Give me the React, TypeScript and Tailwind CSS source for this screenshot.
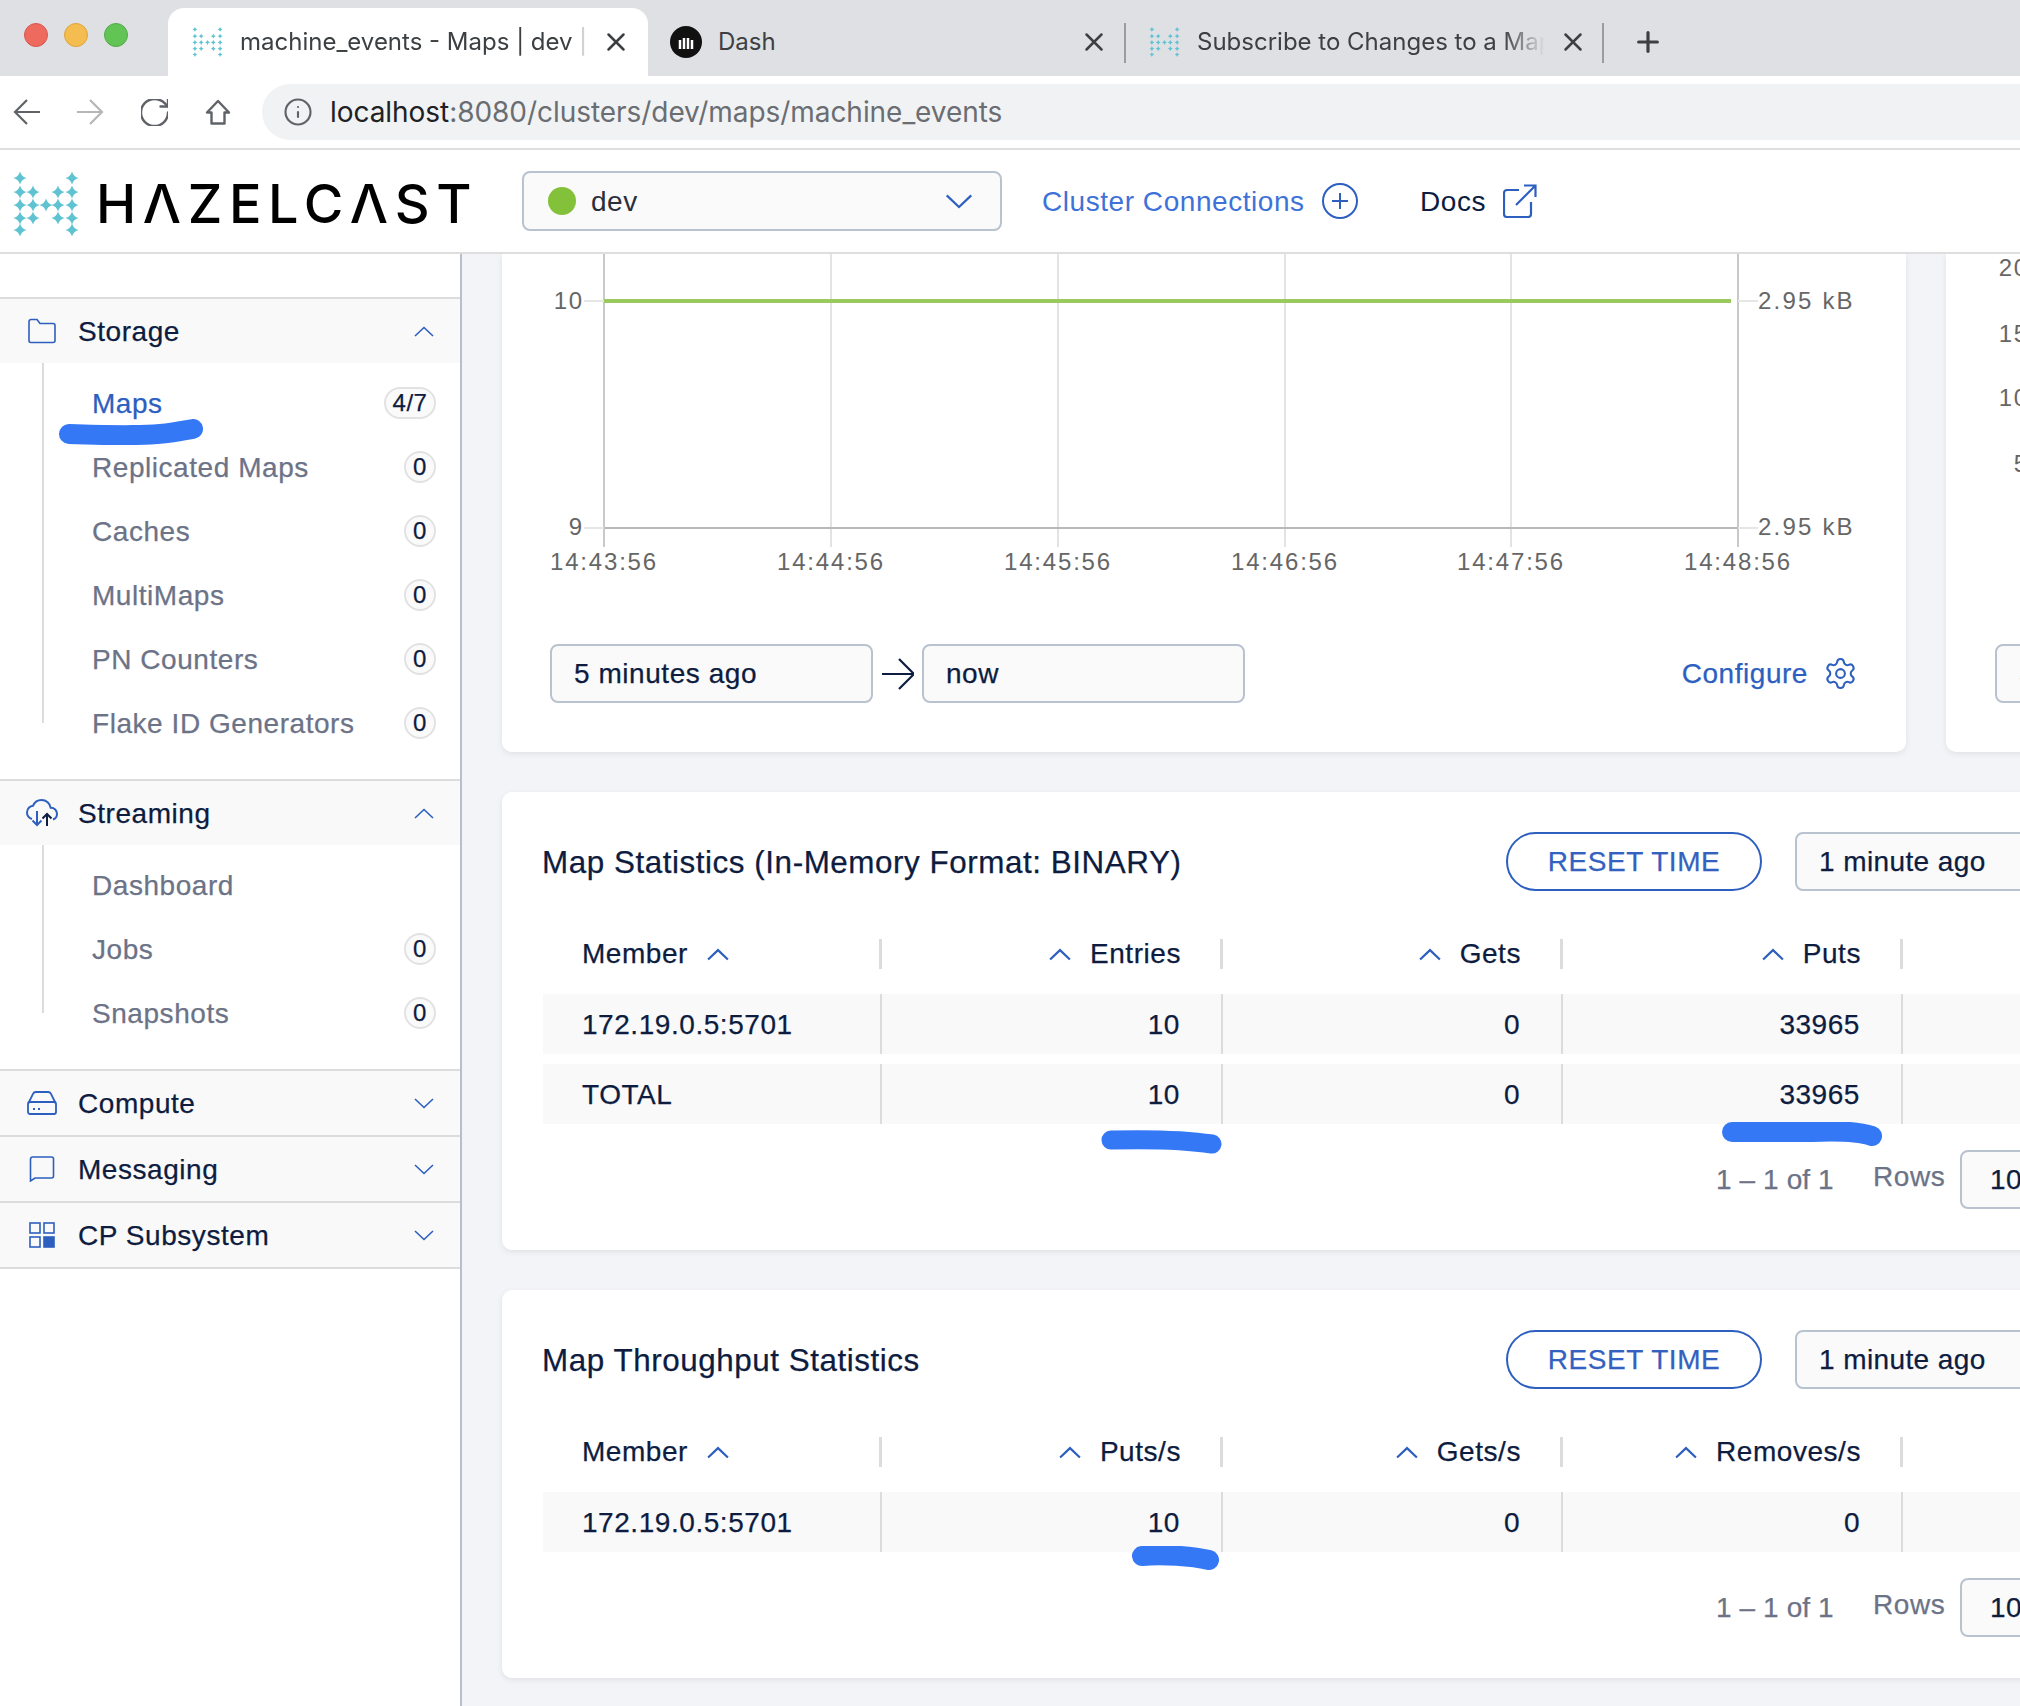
import { Info, Plus, RotateCw, Settings, X } from 'lucide-react';
import type { ReactNode } from 'react';

const STARS = [
  [5, 6], [5, 20], [5, 33], [5, 46], [5, 58],
  [18, 20], [18, 33], [18, 46],
  [31, 33],
  [43, 20], [43, 33], [43, 46],
  [57, 6], [57, 20], [57, 33], [57, 46], [57, 58],
];

function star(cx: number, cy: number, r: number) {
  const k = r * 0.22;
  return `M${cx} ${cy - r}Q${cx + k} ${cy - k} ${cx + r} ${cy}Q${cx + k} ${cy + k} ${cx} ${cy + r}Q${cx - k} ${cy + k} ${cx - r} ${cy}Q${cx - k} ${cy - k} ${cx} ${cy - r}Z`;
}

function LogoMark({ className, r = 6.6 }: { className: string; r?: number }) {
  return (
    <svg viewBox="-2 -1 66 66" className={className} fill="#5fc3d2">
      {STARS.map(([x, y]) => (
        <path key={`${x}-${y}`} d={star(x, y, r)} />
      ))}
    </svg>
  );
}

function Chevron({ up, className = 'w-[20px] h-[11px]', width = 1.6 }: { up?: boolean; className?: string; width?: number }) {
  return (
    <svg viewBox="0 0 20 11" className={className} fill="none" stroke="#2d5fbf" strokeWidth={width}>
      <path d={up ? 'M1 10L10 1.5L19 10' : 'M1 1L10 9.5L19 1'} />
    </svg>
  );
}

function FolderIcon() {
  return (
    <svg viewBox="0 0 28 26" className="ml-[28px] w-[28px] h-[26px]" fill="none" stroke="#2d5fbf" strokeWidth="1.6">
      <path d="M1 3.500a2 2 0 0 1 2-2h6l3 4h13a2 2 0 0 1 2 2v15a2 2 0 0 1-2 2H3a2 2 0 0 1-2-2z" />
    </svg>
  );
}

function CloudIcon() {
  return (
    <svg viewBox="0 0 32 28" className="ml-[26px] w-[32px] h-[28px]" fill="none" strokeWidth="2">
      <path stroke="#2d5fbf" d="M6 20C3 19 1 16.500 1 13.500 1 9.500 4 7 7 6.800 8.500 3.300 12 1 15.500 1c4.800 0 8.500 3.400 9.200 7.800C28.300 8.700 31 11.300 31 15c0 2.500-1.500 4.700-4 5.500" />
      <path stroke="#2d5fbf" d="M11 12v14M6.500 21.500L11 26l4.500-4.500" />
      <path stroke="#0d1c3f" d="M21 27V15M16.500 19.500L21 15l4.500 4.500" />
    </svg>
  );
}

function DriveIcon() {
  return (
    <svg viewBox="0 0 30 24" className="ml-[27px] w-[30px] h-[24px]" fill="none" stroke="#2d5fbf" strokeWidth="1.800">
      <path d="M1.500 12L6 3a3 3 0 0 1 2.500-2h13a3 3 0 0 1 2.500 2L28.500 12" />
      <rect x="1" y="11" width="28" height="12" rx="2" />
      <path d="M6 18h2M11 18h2" />
    </svg>
  );
}

function ChatIcon() {
  return (
    <svg viewBox="0 0 26 26" className="ml-[29px] w-[26px] h-[26px]" fill="none" stroke="#2d5fbf" strokeWidth="1.600">
      <path d="M1.500 3a2 2 0 0 1 2-2h19a2 2 0 0 1 2 2v17a2 2 0 0 1-2 2H6L1.500 25z" />
    </svg>
  );
}

function GridIcon() {
  return (
    <svg viewBox="0 0 26 26" className="ml-[29px] w-[26px] h-[26px]" fill="none" stroke="#2d5fbf" strokeWidth="1.600">
      <rect x="1" y="1" width="10" height="10" />
      <rect x="15" y="1" width="10" height="10" />
      <rect x="1" y="15" width="10" height="10" />
      <rect x="15" y="15" width="10" height="10" fill="#2d5fbf" />
    </svg>
  );
}

function TabBar() {
  return (
    <div className="relative h-[76px] shrink-0 bg-[#dfe0e4] flex items-end font-['Inter',sans-serif] tracking-normal">
      <div className="flex items-center gap-[16px] pl-[24px] w-[168px] self-start pt-[23px]">
        <span className="w-[24px] h-[24px] rounded-full bg-[#ee6a5f] border border-[#d9574d]" />
        <span className="w-[24px] h-[24px] rounded-full bg-[#f5bd4f] border border-[#dfa33c]" />
        <span className="w-[24px] h-[24px] rounded-full bg-[#61c454] border border-[#52ab46]" />
      </div>
      <div className="relative w-[480px] pl-[23px] h-[68px] bg-white rounded-t-[16px] flex items-center">
        <LogoMark className="w-[33px] h-[32px]" r={5} />
        <span className="ml-[16px] w-[346px] overflow-hidden whitespace-nowrap text-[24px] text-[#3c4043] [mask-image:linear-gradient(to_right,black_97%,transparent)]">
          machine_events - Maps | dev | Hazelcast
        </span>
        <X className="ml-[15px] text-[#3c4043]" size={30} strokeWidth={2} />
      </div>
      <div className="relative w-[478px] pl-[22px] h-[68px] flex items-center">
        <svg viewBox="0 0 32 32" className="w-[32px] h-[32px]">
          <circle cx="16" cy="16" r="16" fill="#111" />
          <path d="M10 14v9M14 12v11M18 12v11M22 14v9" stroke="#fff" strokeWidth="2.500" />
        </svg>
        <span className="ml-[16px] text-[24px] text-[#3c4043]">Dash</span>
        <X className="absolute left-[431px] text-[#3c4043]" size={30} strokeWidth={2} />
        <span className="absolute right-0 top-[15px] h-[40px] w-[2px] bg-[#9b9ca0]" />
      </div>
      <div className="relative w-[478px] pl-[22px] h-[68px] flex items-center">
        <LogoMark className="w-[33px] h-[32px]" r={5} />
        <span className="ml-[16px] w-[348px] overflow-hidden whitespace-nowrap text-[24px] text-[#3c4043] [mask-image:linear-gradient(to_right,black_88%,transparent)]">
          Subscribe to Changes to a Map
        </span>
        <X className="absolute left-[432px] text-[#3c4043]" size={30} strokeWidth={2} />
        <span className="absolute right-0 top-[15px] h-[40px] w-[2px] bg-[#9b9ca0]" />
      </div>
      <div className="h-[68px] flex items-center pl-[28px]">
        <Plus className="text-[#3c4043]" size={32} strokeWidth={2.4} />
      </div>
    </div>
  );
}

function Toolbar() {
  return (
    <div className="h-[74px] shrink-0 bg-white border-b-2 border-[#dedede] flex items-center font-['Inter',sans-serif] tracking-normal">
      <div className="flex items-center w-[262px] pl-[13px] gap-[37px]">
        <svg viewBox="0 0 27 26" className="w-[27px] h-[26px]" fill="none" stroke="#5f6368" strokeWidth="2.200">
          <path d="M27 13H2M14 1L2 13l12 12" />
        </svg>
        <svg viewBox="0 0 27 26" className="w-[27px] h-[26px]" fill="none" stroke="#b5b6b8" strokeWidth="2.200">
          <path d="M0 13h25M13 1l12 12-12 12" />
        </svg>
        <RotateCw viewBox="3 3 18 18" className="w-[27px] h-[27px] text-[#5f6368]" strokeWidth={1.6} />
        <svg viewBox="0 0 26 26" className="w-[26px] h-[26px]" fill="none" stroke="#5f6368" strokeWidth="2.400" strokeLinejoin="round">
          <path d="M13 2L2 13.500h4.500V24.500h13V13.500H24z" />
        </svg>
      </div>
      <div className="flex-1 h-[56px] rounded-l-full bg-[#f1f2f4] flex items-center pl-[21px]">
        <Info className="text-[#5f6368]" size={30} strokeWidth={1.7} />
        <span className="ml-[17px] text-[28px] tracking-[-0.05px] text-[#6a6d71] whitespace-nowrap">
          <span className="text-[#202124]">localhost</span>:8080/clusters/dev/maps/machine_events
        </span>
      </div>
    </div>
  );
}

function AppHeader() {
  return (
    <div className="h-[104px] shrink-0 bg-white border-b-2 border-[#dedede] flex items-center">
      <LogoMark className="ml-[13px] mt-[5px] w-[66px] h-[66px]" />
      <span className="ml-[17px] mt-[6px] w-[426px] font-['Inter',sans-serif] text-[54px] leading-none font-medium text-black tracking-[6.6px] whitespace-nowrap">
        HΛZELCΛST
      </span>
      <div className="w-[480px] h-[60px] rounded-[8px] border-2 border-[#b9c2cf] bg-[#fafafa] flex items-center pl-[24px] pr-[27px]">
        <span className="w-[28px] h-[28px] rounded-full bg-[#84c13a]" />
        <span className="ml-[15px] pt-[2px] text-[28px] text-[#2b2f3a]">dev</span>
        <Chevron className="ml-auto w-[28px] h-[15px]" />
      </div>
      <span className="ml-[40px] w-[262px] pt-[2px] text-[28px] text-[#3f72d8] whitespace-nowrap">Cluster Connections</span>
      <svg viewBox="0 0 36 36" className="ml-[18px] w-[36px] h-[36px]" fill="none" stroke="#2d5fbf" strokeWidth="2">
        <circle cx="18" cy="18" r="17" />
        <path d="M18 10v16M10 18h16" />
      </svg>
      <span className="ml-[62px] w-[64px] pt-[2px] text-[28px] text-[#0d1c3f]">Docs</span>
      <svg viewBox="0 0 34 34" className="ml-[19px] w-[34px] h-[34px]" fill="none" stroke="#2d5fbf" strokeWidth="2.200">
        <path d="M16 6H4a3 3 0 0 0-3 3v21a3 3 0 0 0 3 3h21a3 3 0 0 0 3-3V18" />
        <path d="M13 21L32 2M21 1.500h11.500V13" />
      </svg>
    </div>
  );
}

function SideItem({ label, count, active }: { label: string; count?: string; active?: boolean }) {
  return (
    <div className="h-[64px] flex items-center justify-between pl-[92px] pr-[24px]">
      <span className={`pt-[1px] text-[28px] whitespace-nowrap ${active ? 'text-[#2d5fbf]' : 'text-[#6c7387]'}`}>{label}</span>
      {count && (
        <span className={`h-[32px] rounded-full border-2 border-[#e2e2e2] bg-[#fafafa] flex items-center justify-center text-[24px] text-[#0d1c3f] ${count.length > 1 ? 'w-[52px]' : 'w-[32px]'}`}>
          {count}
        </span>
      )}
    </div>
  );
}

function SideSection({ icon, label, open, children, lineHeight }: { icon: ReactNode; label: string; open?: boolean; children?: ReactNode; lineHeight?: string }) {
  return (
    <div>
      <div className="h-[66px] border-t-2 border-[#dcdcdc] bg-[#f9f9f9] flex items-center pr-[26px]">
        <span className="w-[78px] flex items-center">{icon}</span>
        <span className="pt-[2px] text-[28px] text-[#0d1c3f]">{label}</span>
        <Chevron up={open} className="ml-auto w-[20px] h-[11px]" />
      </div>
      {children && (
        <div className="relative pt-[8px] pb-[24px]">
          <span className={`absolute left-[42px] top-0 w-[2px] bg-[#dcdcdc] ${lineHeight}`} />
          {children}
        </div>
      )}
    </div>
  );
}

function Sidebar() {
  return (
    <aside className="w-[462px] shrink-0 bg-white border-r-2 border-[#b8bfca] pt-[43px] [-webkit-text-stroke:0.25px]">
      <SideSection icon={<FolderIcon />} label="Storage" open lineHeight="h-[360px]">
        <SideItem label="Maps" count="4/7" active />
        <SideItem label="Replicated Maps" count="0" />
        <SideItem label="Caches" count="0" />
        <SideItem label="MultiMaps" count="0" />
        <SideItem label="PN Counters" count="0" />
        <SideItem label="Flake ID Generators" count="0" />
      </SideSection>
      <SideSection icon={<CloudIcon />} label="Streaming" open lineHeight="h-[168px]">
        <SideItem label="Dashboard" />
        <SideItem label="Jobs" count="0" />
        <SideItem label="Snapshots" count="0" />
      </SideSection>
      <SideSection icon={<DriveIcon />} label="Compute" />
      <SideSection icon={<ChatIcon />} label="Messaging" />
      <SideSection icon={<GridIcon />} label="CP Subsystem" />
      <div className="border-t-2 border-[#dcdcdc]" />
    </aside>
  );
}

const GRID_X = [102, 329, 556, 783, 1009, 1236];
const TIMES = ['14:43:56', '14:44:56', '14:45:56', '14:46:56', '14:47:56', '14:48:56'];

function Chart() {
  const labelClass = "text-[24px] tracking-[1.8px] fill-[#666] font-['Liberation_Sans',sans-serif]";
  const unitClass = "text-[24px] tracking-[2.2px] fill-[#666] font-['Liberation_Sans',sans-serif]";
  return (
    <svg viewBox="0 0 1404 340" className="w-[1404px] h-[340px] block">
      {GRID_X.map((x, i) => (
        <line key={x} x1={x} x2={x} y1="0" y2="293" stroke={i === 0 || i === 5 ? '#c9c9c9' : '#e3e3e3'} strokeWidth="2" />
      ))}
      <line x1="82" x2="102" y1="47" y2="47" stroke="#e6e6e6" strokeWidth="2" />
      <line x1="82" x2="102" y1="274" y2="274" stroke="#e6e6e6" strokeWidth="2" />
      <line x1="1236" x2="1256" y1="47" y2="47" stroke="#e6e6e6" strokeWidth="2" />
      <line x1="1236" x2="1256" y1="274" y2="274" stroke="#e6e6e6" strokeWidth="2" />
      <line x1="102" x2="1236" y1="274" y2="274" stroke="#b9b9b9" strokeWidth="2" />
      <line x1="102" x2="1229" y1="47" y2="47" stroke="#9ac95e" strokeWidth="4" />
      <text x="82" y="55" textAnchor="end" className={labelClass}>10</text>
      <text x="82" y="281" textAnchor="end" className={labelClass}>9</text>
      <text x="1256" y="55" className={unitClass}>2.95 kB</text>
      <text x="1256" y="281" className={unitClass}>2.95 kB</text>
      {GRID_X.map((x, i) => (
        <text key={x} x={x} y="316" textAnchor="middle" className={labelClass}>{TIMES[i]}</text>
      ))}
    </svg>
  );
}

function Field({ value, className }: { value: string; className: string }) {
  return (
    <div className={`h-[59px] shrink-0 rounded-[8px] border-2 border-[#b9c2cf] bg-[#fafafa] flex items-center text-[28px] text-[#0d1c3f] whitespace-nowrap ${className}`}>
      {value}
    </div>
  );
}

function ChartCards() {
  return (
    <div className="flex gap-[40px]">
      <section className="w-[1404px] shrink-0 h-[498px] bg-white rounded-b-[10px] shadow-[0_2px_6px_rgba(0,0,0,0.08)]">
        <Chart />
        <div className="mt-[50px] px-[48px] flex items-center">
          <Field value="5 minutes ago" className="w-[323px] pl-[22px]" />
          <svg viewBox="0 0 32 32" className="ml-[9px] w-[32px] h-[32px]" fill="none" stroke="#0d1c3f" strokeWidth="2.200">
            <path d="M0 16h31M17 1l15 15-15 15" />
          </svg>
          <Field value="now" className="ml-[8px] w-[323px] pl-[22px]" />
          <span className="ml-auto text-[28px] text-[#2d5fbf]">Configure</span>
          <Settings className="ml-[15px] text-[#2d5fbf]" size={35} strokeWidth={1.4} />
        </div>
      </section>
      <section className="w-[600px] shrink-0 h-[498px] bg-white rounded-b-[10px] shadow-[0_2px_6px_rgba(0,0,0,0.08)]">
        <svg viewBox="0 0 200 340" className="w-[200px] h-[340px] block">
          <g className="text-[24px] fill-[#666] tracking-[1.8px] font-['Liberation_Sans',sans-serif]">
            <text x="83" y="22" textAnchor="end">20</text>
            <text x="83" y="88" textAnchor="end">15</text>
            <text x="83" y="152" textAnchor="end">10</text>
            <text x="83" y="218" textAnchor="end">5</text>
          </g>
        </svg>
        <div className="mt-[50px] pl-[49px]">
          <Field value="5 minutes ago" className="w-[322px] pl-[22px]" />
        </div>
      </section>
    </div>
  );
}

function HeadCell({ label, first }: { label: string; first?: boolean }) {
  return (
    <div className={`h-[30px] border-r-[3px] border-[#dcdcdc] flex items-center text-[28px] text-[#0d1c3f] gap-[19px] ${first ? 'pl-[39px]' : 'justify-end pr-[39px]'}`}>
      {!first && <Chevron up width={2} className="w-[22px] h-[13px]" />}
      <span>{label}</span>
      {first && <Chevron up width={2} className="w-[22px] h-[13px]" />}
    </div>
  );
}

function DataRow({ cells }: { cells: string[] }) {
  return (
    <div className="grid grid-cols-[339px_341px_340px_340px_1fr] h-[60px] bg-[#f9f9f9] text-[28px] text-[#0d1c3f]">
      {cells.map((c, i) => (
        <div key={i} className={`border-r-2 border-[#dcdcdc] flex items-center pt-[2px] ${i === 0 ? 'pl-[39px]' : 'justify-end pr-[41px]'}`}>
          {c}
        </div>
      ))}
      <div />
    </div>
  );
}

function StatsCard({ title, head, rows }: { title: string; head: string[]; rows: string[][] }) {
  return (
    <section className="w-[1700px] shrink-0 bg-white rounded-[10px] pl-[41px] pt-[40px] pb-[41px] shadow-[0_2px_6px_rgba(0,0,0,0.08)]">
      <div className="flex items-center">
        <h2 className="w-[964px] -ml-[1px] pt-[2px] shrink-0 text-[31.4px] font-normal text-[#0d1c3f] whitespace-nowrap">{title}</h2>
        <button className="w-[256px] h-[59px] pt-[1px] shrink-0 rounded-full border-2 border-[#2d5fbf] text-[28px] text-[#3361c0]">RESET TIME</button>
        <Field value="1 minute ago" className="ml-[33px] w-[400px] pl-[22px] tracking-[0.4px]" />
      </div>
      <div className="mt-[48px] grid grid-cols-[339px_341px_340px_340px_1fr]">
        {head.map((h, i) => (
          <HeadCell key={h} label={h} first={i === 0} />
        ))}
      </div>
      <div className="mt-[25px] flex flex-col gap-[10px]">
        {rows.map((r) => (
          <DataRow key={r[0]} cells={r} />
        ))}
      </div>
      <div className="mt-[26px] ml-[1173px] flex items-center text-[28px] text-[#6c7387] whitespace-nowrap">
        <span className="w-[157px] tracking-[0.1px]">1 – 1 of 1</span>
        <span className="w-[87px] -mt-[6px]">Rows</span>
        <Field value="10" className="w-[120px] pl-[28px] tracking-[0.55px]" />
      </div>
    </section>
  );
}

function Mark({ className, d, viewBox, width = 19 }: { className: string; d: string; viewBox: string; width?: number }) {
  return (
    <svg viewBox={viewBox} className={`absolute ${className}`} fill="none" stroke="#3478f6" strokeWidth={width} strokeLinecap="round">
      <path d={d} />
    </svg>
  );
}

export default function App() {
  return (
    <div className="relative w-[2020px] h-[1706px] overflow-hidden flex flex-col bg-white font-['Liberation_Sans',sans-serif] tracking-[0.55px]">
      <TabBar />
      <Toolbar />
      <AppHeader />
      <div className="flex flex-1 min-h-0">
        <Sidebar />
        <main className="flex-1 min-w-0 overflow-hidden bg-[#f3f4f8] pl-[40px] flex flex-col gap-[40px] [-webkit-text-stroke:0.25px]">
          <ChartCards />
          <StatsCard
            title="Map Statistics (In-Memory Format: BINARY)"
            head={['Member', 'Entries', 'Gets', 'Puts']}
            rows={[
              ['172.19.0.5:5701', '10', '0', '33965'],
              ['TOTAL', '10', '0', '33965'],
            ]}
          />
          <StatsCard
            title="Map Throughput Statistics"
            head={['Member', 'Puts/s', 'Gets/s', 'Removes/s']}
            rows={[['172.19.0.5:5701', '10', '0', '0']]}
          />
        </main>
      </div>
      <Mark className="left-[59px] top-[419px] w-[144px] h-[26px]" viewBox="0 0 144 26" width={20} d="M10 15C45 16 95 18 122 12L134 10" />
      <Mark className="left-[1101px] top-[1130px] w-[121px] h-[24px]" viewBox="0 0 121 24" d="M10 10C50 9 85 10 111 14" />
      <Mark className="left-[1722px] top-[1122px] w-[160px] h-[25px]" viewBox="0 0 160 25" width={20} d="M10 10L90 10C115 9 135 9 150 14" />
      <Mark className="left-[1132px] top-[1546px] w-[87px] h-[24px]" viewBox="0 0 87 24" width={20} d="M10 10C30 8 60 10 77 14" />
    </div>
  );
}
